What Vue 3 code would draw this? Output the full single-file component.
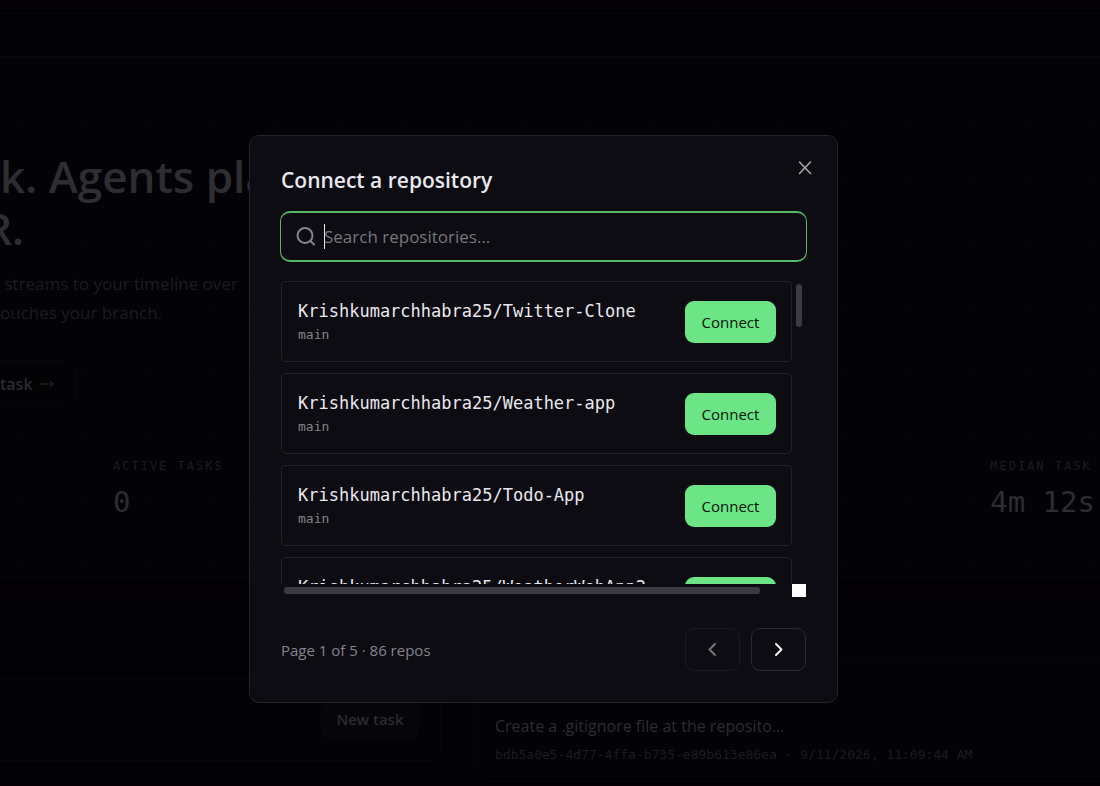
<script setup>
import { ref, onMounted } from 'vue'

const query = ref('')
const searchBox = ref(null)
const repos = [
  { name: 'Krishkumarchhabra25/Twitter-Clone', branch: 'main' },
  { name: 'Krishkumarchhabra25/Weather-app', branch: 'main' },
  { name: 'Krishkumarchhabra25/Todo-App', branch: 'main' },
  { name: 'Krishkumarchhabra25/WeatherWebApp2', branch: 'main' },
]

onMounted(() => searchBox.value.focus())
</script>

<template>
  <div class="page">
    <div class="topbar"></div>
    <header class="navbar"></header>

    <section class="hero">
      <div class="intro">
        <h1>k. Agents pla<br><span class="cut">R.</span></h1>
        <p class="lead">&nbsp;streams to your timeline over<br>ouches your branch.</p>
        <button type="button" class="ghost">task <svg viewBox="0 0 16 12" width="16" height="12"><path d="M1 6h13M11 3l3 3-3 3" /></svg></button>
      </div>
      <dl class="stats">
        <div>
          <dt>ACTIVE TASKS</dt>
          <dd>0</dd>
        </div>
        <div>
          <dt>MEDIAN TASK</dt>
          <dd>4m 12s</dd>
        </div>
      </dl>
    </section>

    <section class="board">
      <div class="panel composer">
        <button type="button" class="new-task">New task</button>
      </div>
      <article class="panel task">
        <p class="task-title">Create a .gitignore file at the reposito...</p>
        <p class="task-meta">bdb5a0e5-4d77-4ffa-b735-e89b613e86ea · 9/11/2026, 11:09:44 AM</p>
      </article>
    </section>

    <div class="overlay">
      <div class="dialog" role="dialog" aria-modal="true" aria-labelledby="dialog-title">
        <div class="dialog-head">
          <h2 id="dialog-title">Connect a repository</h2>
          <button type="button" class="close" aria-label="Close">
            <svg viewBox="0 0 16 16" width="16" height="16"><path d="M2.500 2l11 11.500M13.500 2l-11 11.500" /></svg>
          </button>
        </div>

        <label class="search">
          <svg viewBox="0 0 20 20" width="20" height="20"><circle cx="9" cy="8.500" r="7.500" /><path d="M14.500 14L18 17.500" /></svg>
          <span v-if="!query" class="caret"></span>
          <input ref="searchBox" v-model="query" type="text" aria-label="Search repositories" placeholder="Search repositories...">
        </label>

        <div class="scroller">
          <ul class="repos">
            <li v-for="repo in repos" :key="repo.name" class="repo">
              <div class="repo-text">
                <span class="repo-name">{{ repo.name }}</span>
                <span class="repo-branch">{{ repo.branch }}</span>
              </div>
              <button type="button" class="connect">Connect</button>
            </li>
          </ul>
          <div class="track-y"><div class="thumb-y"></div></div>
          <div class="track-x"><div class="thumb-x"></div></div>
          <div class="corner"></div>
        </div>

        <footer class="pager">
          <span>Page 1 of 5 · 86 repos</span>
          <div class="pager-buttons">
            <button type="button" class="step" disabled aria-label="Previous page">
              <svg viewBox="0 0 20 20" width="20" height="20"><path d="M12 4L6.500 9.500l5.500 5.500" /></svg>
            </button>
            <button type="button" class="step" aria-label="Next page">
              <svg viewBox="0 0 20 20" width="20" height="20"><path d="M7 4l5.500 5.500L7 15" /></svg>
            </button>
          </div>
        </footer>
      </div>
    </div>
  </div>
</template>

<style>
body {
  background: #030106;
}
</style>

<style scoped>
* {
  box-sizing: border-box;
}
.page {
  height: 100vh;
  overflow: hidden;
  background: #030106;
  color: #2e2d32;
  font-family: "Open Sans", "Noto Sans", sans-serif;
}
h1, h2, p, ul, dl, dd {
  margin: 0;
  padding: 0;
}
button {
  font-family: inherit;
  padding: 0;
}
svg {
  fill: none;
  stroke: currentColor;
  stroke-linecap: round;
  stroke-linejoin: round;
}
.topbar {
  height: 13px;
}
.navbar {
  height: 45px;
  background: #020103;
  border-top: 1px solid #070608;
  border-bottom: 2px solid #070608;
}
.hero {
  height: 519px;
  padding-top: 92px;
  border-bottom: 1px solid #060509;
  background-color: #020207;
  background-image:
    linear-gradient(90deg, #040409 1px, transparent 1px),
    linear-gradient(#040409 1px, transparent 1px);
  background-size: 63px 63px;
  background-position: 23px -1px;
}
h1 {
  font-size: 44px;
  line-height: 52px;
  font-weight: 700;
  font-weight: 600;
  white-space: nowrap;
}
.cut {
  margin-left: -16px;
}
.lead {
  margin-top: 15px;
  font-size: 17px;
  line-height: 29px;
  color: #1d1d21;
  white-space: nowrap;
}
.ghost {
  display: flex;
  align-items: center;
  gap: 6px;
  width: 76px;
  height: 47px;
  margin-top: 33px;
  border: 1px solid #070609;
  border-left: 0;
  border-radius: 0 9px 9px 0;
  background: #030204;
  color: #2c2b2f;
  font-size: 16px;
  font-weight: 600;
}
.stats {
  display: flex;
  justify-content: space-between;
  margin-top: 50px;
  padding: 0 5px 0 113px;
  font-family: "DejaVu Sans Mono", monospace;
  white-space: nowrap;
}
dt {
  font-size: 12px;
  line-height: 18px;
  letter-spacing: 2px;
  color: #1d1d21;
}
dd {
  margin-top: 9px;
  font-size: 29px;
  line-height: 36px;
}
.board {
  display: grid;
  grid-template-columns: 441px 1fr;
  column-gap: 32px;
  align-items: start;
  margin-top: 26px;
  padding-top: 54px;
  background: #020103;
}
.panel {
  background: #020207;
  border: 1px solid #07070b;
}
.composer {
  display: flex;
  justify-content: flex-end;
  margin-top: 20px;
  padding: 21px;
  border-left: 0;
  border-radius: 0 9px 9px 0;
}
.new-task {
  width: 98px;
  height: 40px;
  border: 0;
  border-radius: 8px;
  background: #060509;
  color: #2c2b2f;
  font-size: 15px;
  font-weight: 600;
}
.task {
  padding: 54px 21px 16px;
  border-right: 0;
  border-radius: 9px 0 0 9px;
  white-space: nowrap;
}
.task-title {
  font-size: 16px;
  line-height: 28px;
  color: #2d2c30;
}
.task-meta {
  margin-top: 5px;
  font-family: "DejaVu Sans Mono", monospace;
  font-size: 13px;
  line-height: 20px;
  color: #1d1d21;
}
.overlay {
  position: fixed;
  inset: 0;
  display: flex;
  align-items: center;
  justify-content: center;
  padding: 52px 13px 0 0;
}
.dialog {
  width: 100%;
  max-width: 589px;
  padding: 31px;
  border: 1px solid #232329;
  border-radius: 10px;
  background: #0d0c12;
  color: #e9e8ee;
}
.dialog-head {
  position: relative;
  margin-bottom: 17px;
}
h2 {
  font-size: 21px;
  line-height: 27px;
  font-weight: 600;
}
.close {
  position: absolute;
  top: -7px;
  right: -7px;
  display: grid;
  place-items: center;
  width: 16px;
  height: 16px;
  border: 0;
  background: none;
  color: #aaa9ae;
}
.close svg {
  stroke-width: 1.5;
}
.search {
  display: flex;
  align-items: center;
  height: 51px;
  margin: 0 -1px;
  padding: 0 15px;
  border: solid #56b869;
  border-width: 2px 1px;
  border-radius: 10px;
}
.search svg {
  flex: none;
  margin-right: 8px;
  stroke-width: 2;
  color: #85848b;
}
.caret {
  width: 1px;
  height: 25px;
  margin-right: -1px;
  background: #e9e8ee;
}
.search input {
  flex: 1;
  min-width: 0;
  height: 28px;
  padding: 0;
  border: 0;
  outline: 0;
  background: none;
  color: #e9e8ee;
  font-family: inherit;
  font-size: 17px;
}
.search input:placeholder-shown {
  caret-color: transparent;
}
.search input::placeholder {
  color: #77767d;
  opacity: 1;
}
.scroller {
  display: grid;
  grid-template-columns: 1fr 14px;
  grid-template-rows: 303px 13px;
  margin-top: 19px;
}
.repos {
  display: flex;
  flex-direction: column;
  gap: 11px;
  overflow: hidden;
  list-style: none;
}
.repo {
  display: flex;
  flex: none;
  align-items: center;
  justify-content: space-between;
  height: 81px;
  padding: 0 15px 0 16px;
  border: 1px solid #232329;
  border-radius: 5px;
}
.repo-text {
  display: flex;
  flex-direction: column;
  font-family: "DejaVu Sans Mono", monospace;
  white-space: nowrap;
}
.repo-name {
  font-size: 17px;
  line-height: 26px;
}
.repo-branch {
  font-size: 13px;
  line-height: 22px;
  color: #85848b;
}
.connect {
  width: 91px;
  height: 42px;
  border: 0;
  border-radius: 9px;
  background: #6be585;
  color: #08140b;
  font-size: 15px;
  font-weight: 500;
}
.track-y {
  padding: 3px 4px;
}
.thumb-y {
  height: 43px;
  border-radius: 3px;
  background: #3a3a43;
}
.track-x {
  padding: 3px 32px 3px 3px;
}
.thumb-x {
  height: 7px;
  border-radius: 3px;
  background: #3a3a43;
}
.corner {
  background: #fff;
}
.pager {
  display: flex;
  align-items: center;
  justify-content: space-between;
  margin-top: 31px;
  color: #85848b;
  font-size: 15px;
}
.pager-buttons {
  display: flex;
  gap: 11px;
}
.step {
  display: grid;
  place-items: center;
  width: 55px;
  height: 43px;
  border: 1px solid #29292f;
  border-radius: 9px;
  background: transparent;
  color: #f1f0f5;
}
.step svg {
  stroke-width: 2;
}
.step:disabled {
  border-color: #1a1a20;
  color: #77767d;
}
</style>
